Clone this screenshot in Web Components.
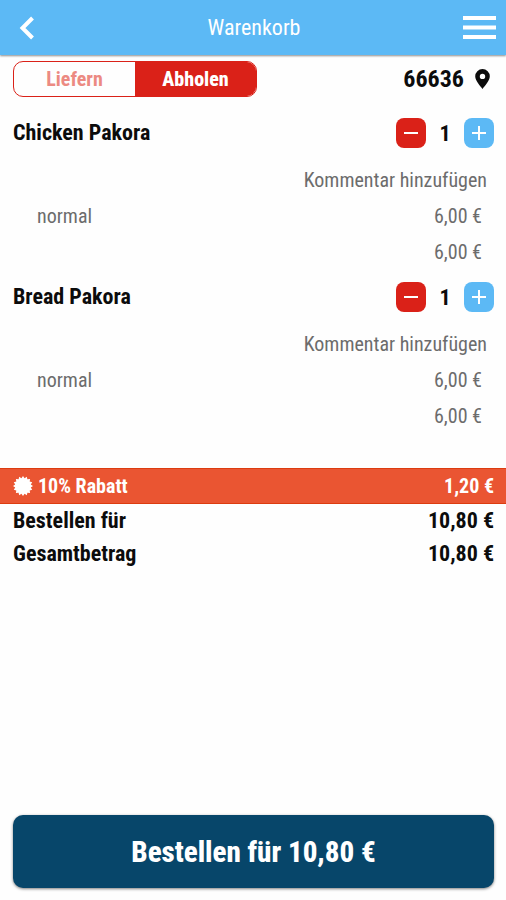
<!DOCTYPE html>
<html lang="de">
<head>
<meta charset="utf-8">
<meta name="viewport" content="width=device-width, initial-scale=1">
<title>Warenkorb</title>
<style>
  :root {
    --color-primary: #5cb9f5;
    --color-danger: #da2118;
    --color-danger-muted: #ec8a82;
    --color-discount: #ea5532;
    --color-order: #07466a;
    --color-text: #0c0c0c;
    --color-muted: #6c6c6c;
    --space-start: 13px;
    --space-end: 12px;
    --font-size-sm: 20px;
    --font-size-md: 22px;
    --font-size-lg: 24px;
    --font-size-xl: 29px;
  }

  body {
    margin: 0;
    background: #fefefe;
    color: var(--color-text);
    font-family: "Roboto Condensed", Roboto, "Liberation Sans", sans-serif;
  }
</style>
</head>
<body>
<cart-page>
  <cart-header slot="header">Warenkorb</cart-header>
  <delivery-bar zip="66636"></delivery-bar>
  <cart-item name="Chicken Pakora" count="1" option="normal" price="6,00 €" total="6,00 €"></cart-item>
  <cart-item name="Bread Pakora" count="1" option="normal" price="6,00 €" total="6,00 €"></cart-item>
  <cart-summary>
    <discount-row slot="discount" amount="1,20 €">10% Rabatt</discount-row>
    <total-row amount="10,80 €">Bestellen für</total-row>
    <total-row amount="10,80 €">Gesamtbetrag</total-row>
  </cart-summary>
  <order-button slot="footer">Bestellen für 10,80 €</order-button>
</cart-page>

<script>
const resetStyles = `
  :host, *, *::before, *::after { box-sizing: border-box; }
  button {
    margin: 0;
    border: 0;
    padding: 0;
    background: none;
    color: inherit;
    font: inherit;
    cursor: pointer;
    appearance: none;
  }
  button:focus-visible { outline: 2px solid #07466a; outline-offset: 2px; }
  svg { display: block; }
`;

const define = (tagName, render, setup) => {
  customElements.define(tagName, class extends HTMLElement {
    constructor() {
      super();
      this.attachShadow({ mode: "open" });
    }

    connectedCallback() {
      const template = document.createElement("template");
      template.innerHTML = `<style>${resetStyles}</style>${render(this)}`;
      this.shadowRoot.replaceChildren(template.content.cloneNode(true));
      if (setup) setup(this.shadowRoot);
    }
  });
};

define("cart-page", () => `
  <style>
    :host { display: flex; flex-direction: column; min-height: 100vh; }
    main { flex: 1; }
    footer { padding: 12px var(--space-end) 12px var(--space-start); }
  </style>
  <slot name="header"></slot>
  <main><slot></slot></main>
  <footer><slot name="footer"></slot></footer>
`);

define("cart-header", () => `
  <style>
    :host { display: block; }
    header {
      display: grid;
      grid-template-columns: 1fr auto 1fr;
      align-items: center;
      height: 55px;
      padding: 0 10px 0 12px;
      background: var(--color-primary);
      box-shadow: 0 1px 2px rgb(0 0 0 / 45%);
      color: #fff;
    }
    h1 { margin: 0; font-size: var(--font-size-md); font-weight: 400; line-height: 28px; }
    .menu { justify-self: end; }
  </style>
  <header>
    <button type="button" aria-label="Zurück">
      <svg width="30" height="30" viewBox="0 0 30 30" fill="none" stroke="currentColor" stroke-width="4"><path d="M20.500 5 10.500 15l10 10"/></svg>
    </button>
    <h1><slot></slot></h1>
    <button class="menu" type="button" aria-label="Menü">
      <svg width="33" height="23" viewBox="0 0 33 23" fill="currentColor"><path d="M0 0h33v4H0zM0 9.500h33v4H0zM0 19h33v4H0z"/></svg>
    </button>
  </header>
`);

define("delivery-bar", (host) => `
  <style>
    :host {
      display: flex;
      align-items: center;
      justify-content: space-between;
      padding: 6px var(--space-end) 9px var(--space-start);
    }
    .modes {
      display: grid;
      grid-template-columns: 1fr 1fr;
      width: 244px;
      height: 36px;
      overflow: hidden;
      border: 1px solid var(--color-danger);
      border-radius: 10px;
    }
    .modes button {
      color: var(--color-danger-muted);
      font-size: var(--font-size-sm);
      font-weight: 700;
    }
    .modes button[aria-pressed="true"] { background: var(--color-danger); color: #fff; font-weight: 800; }
    .place {
      display: flex;
      align-items: center;
      gap: 11px;
      padding-right: 4px;
      font-size: var(--font-size-lg);
      font-weight: 700;
    }
  </style>
  <div class="modes" role="group" aria-label="Bestellart">
    <button type="button" aria-pressed="false">Liefern</button>
    <button type="button" aria-pressed="true">Abholen</button>
  </div>
  <button class="place" type="button">
    ${host.getAttribute("zip")}
    <svg width="15" height="20" viewBox="0 0 15 20" fill="currentColor"><path fill-rule="evenodd" d="M7.500 0A7.300 7.300 0 0 0 .2 7.300C.2 12 5.500 17.200 7.500 20c2-2.800 7.300-8 7.300-12.700A7.300 7.300 0 0 0 7.500 0Zm0 4.700a2.700 2.700 0 1 1 0 5.400 2.700 2.700 0 0 1 0-5.400Z"/></svg>
  </button>
`, (root) => {
  const modes = root.querySelectorAll(".modes button");
  modes.forEach((mode) => mode.addEventListener("click", () => {
    modes.forEach((other) => other.setAttribute("aria-pressed", String(other === mode)));
  }));
});

define("quantity-stepper", (host) => `
  <style>
    :host { display: flex; align-items: center; }
    button {
      display: grid;
      place-items: center;
      width: 30px;
      height: 30px;
      border-radius: 8px;
      color: #fff;
    }
    .less { background: var(--color-danger); }
    .more { background: var(--color-primary); }
    output {
      width: 38px;
      font-size: var(--font-size-md);
      font-weight: 700;
      text-align: center;
    }
  </style>
  <button class="less" type="button" aria-label="Weniger">
    <svg width="14" height="14" viewBox="0 0 14 14" fill="none" stroke="currentColor" stroke-width="2"><path d="M0 7h14"/></svg>
  </button>
  <output>${host.getAttribute("count")}</output>
  <button class="more" type="button" aria-label="Mehr">
    <svg width="14" height="14" viewBox="0 0 14 14" fill="none" stroke="currentColor" stroke-width="2"><path d="M0 7h14M7 0v14"/></svg>
  </button>
`, (root) => {
  const output = root.querySelector("output");
  const step = (amount) => {
    output.value = Math.max(0, Number(output.value) + amount);
  };
  root.querySelector(".less").addEventListener("click", () => step(-1));
  root.querySelector(".more").addEventListener("click", () => step(1));
});

define("cart-item", (host) => `
  <style>
    :host { display: block; padding: 12px var(--space-end) 0 var(--space-start); }
    .title {
      display: flex;
      align-items: center;
      justify-content: space-between;
      margin-bottom: 14px;
    }
    h2 { margin: 0; font-size: var(--font-size-md); font-weight: 700; line-height: 28px; }
    .details { color: var(--color-muted); font-size: var(--font-size-sm); line-height: 36px; }
    .comment { display: block; margin-left: auto; padding-right: 7px; }
    .line {
      display: flex;
      justify-content: space-between;
      padding: 0 12px 0 24px;
    }
    .total { justify-content: flex-end; }
  </style>
  <div class="title">
    <h2>${host.getAttribute("name")}</h2>
    <quantity-stepper count="${host.getAttribute("count")}"></quantity-stepper>
  </div>
  <div class="details">
    <button class="comment" type="button">Kommentar hinzufügen</button>
    <div class="line"><span>${host.getAttribute("option")}</span><span>${host.getAttribute("price")}</span></div>
    <div class="line total"><span>${host.getAttribute("total")}</span></div>
  </div>
`);

define("cart-summary", () => `
  <style>
    :host { display: block; margin-top: 34px; }
  </style>
  <slot name="discount"></slot>
  <slot></slot>
`);

// Badge outline: points alternate between an outer and an inner radius.
const badgePoints = Array.from({ length: 32 }, (_, i) => {
  const radius = i % 2 ? 8 : 10;
  const angle = (i * Math.PI) / 16;
  return `${(10 + radius * Math.sin(angle)).toFixed(1)},${(10 - radius * Math.cos(angle)).toFixed(1)}`;
}).join(" ");

define("discount-row", (host) => `
  <style>
    :host {
      display: flex;
      align-items: center;
      justify-content: space-between;
      height: 36px;
      border-top: 1px solid #dc3c10;
      border-bottom: 1px solid #dc3c10;
      padding: 0 var(--space-end) 0 var(--space-start);
      background: var(--color-discount);
      color: #fff;
      font-size: var(--font-size-sm);
      font-weight: 700;
    }
    .label { display: flex; align-items: center; gap: 5px; }
  </style>
  <span class="label">
    <svg width="20" height="20" viewBox="0 0 20 20" fill="currentColor" aria-hidden="true"><polygon points="${badgePoints}"/></svg>
    <slot></slot>
  </span>
  <span>${host.getAttribute("amount")}</span>
`);

define("total-row", (host) => `
  <style>
    :host {
      display: flex;
      justify-content: space-between;
      padding: 0 var(--space-end) 0 var(--space-start);
      font-size: var(--font-size-md);
      font-weight: 700;
      line-height: 33px;
    }
  </style>
  <span><slot></slot></span>
  <span>${host.getAttribute("amount")}</span>
`);

define("order-button", () => `
  <style>
    :host { display: block; }
    button {
      width: 100%;
      height: 73px;
      border-radius: 10px;
      background: var(--color-order);
      box-shadow: 0 1px 3px rgb(0 0 0 / 50%);
      color: #fff;
      font-size: var(--font-size-xl);
      font-weight: 800;
    }
  </style>
  <button type="button"><slot></slot></button>
`);
</script>
</body>
</html>
